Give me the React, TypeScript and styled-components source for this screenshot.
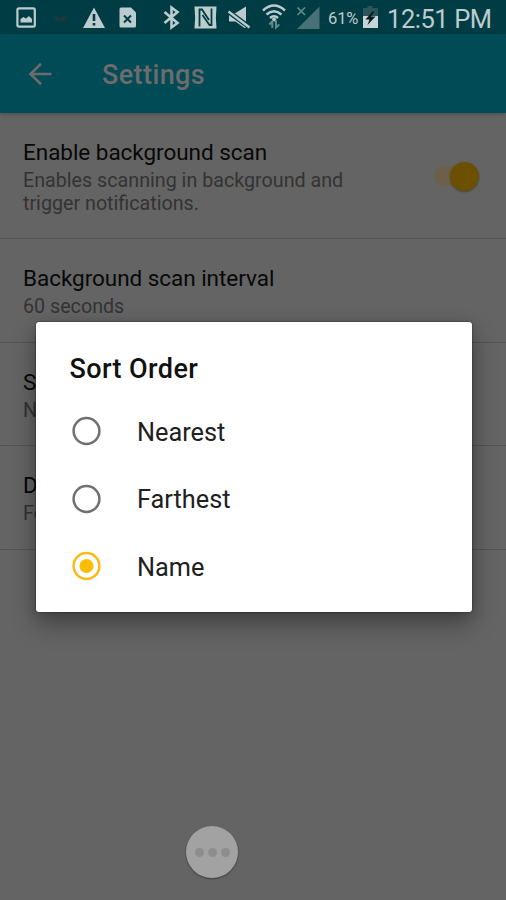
import React from "react";
import styled, { createGlobalStyle } from "styled-components";

const GlobalStyle = createGlobalStyle`
  * { box-sizing: border-box; }
  body { margin: 0; background: #646464; font-family: Roboto, "Liberation Sans", sans-serif; overflow: hidden; }
`;

const Screen = styled.main`
  position: relative;
  height: 900px;
  width: 506px;
  overflow: hidden;
  background: #646464;
`;

const StatusBar = styled.header`
  height: 34px;
  background: #003c43;
  display: flex;
  align-items: flex-start;
`;

const StatusIcons = styled.svg`
  flex: none;
  width: 326px;
  height: 34px;
`;

const Percent = styled.span`
  width: 36px;
  padding: 8px 0 0 2px;
  font-size: 16.5px;
  line-height: 21px;
  letter-spacing: -0.1px;
  color: #bccbcd;
`;

const Battery = styled.svg`
  width: 18px;
  height: 34px;
`;

const Clock = styled.span`
  padding: 4px 0 0 7px;
  font-size: 25.5px;
  line-height: 30px;
  letter-spacing: -0.45px;
  white-space: nowrap;
  color: #bccbcd;
`;

const Toolbar = styled.nav`
  height: 79px;
  display: flex;
  align-items: center;
  padding-left: 28px;
  background: #004b55;
  box-shadow: 0 1px 4px rgba(0, 0, 0, 0.25);
`;

const BackIcon = styled.svg`
  width: 24px;
  height: 24px;
`;

const PageTitle = styled.h1`
  margin: 2px 0 0 50px;
  font-size: 27px;
  line-height: 34px;
  font-weight: 500;
  letter-spacing: 0.4px;
  color: #6c6c6c;
`;

const Row = styled.section<{ $height: number }>`
  height: ${(p) => p.$height}px;
  display: flex;
  justify-content: space-between;
  padding: 24px 27px 0 23px;
  border-bottom: 1px solid #545454;
`;

const RowTitle = styled.h2`
  margin: 0;
  font-size: 22.5px;
  line-height: 30px;
  font-weight: 400;
  letter-spacing: -0.04px;
  color: #080808;
`;

const RowSummary = styled.p`
  margin: 2px 0 0;
  width: 340px;
  font-size: 19.7px;
  line-height: 23px;
  letter-spacing: 0;
  color: #333;
`;

const SwitchTrack = styled.span`
  margin: 29px 3px 0 0;
  width: 42px;
  height: 20px;
  display: flex;
  justify-content: flex-end;
  align-items: center;
  border-radius: 10px;
  background: #6a6148;
`;

const SwitchThumb = styled.span`
  flex: none;
  width: 29px;
  height: 29px;
  margin-right: -3px;
  border-radius: 50%;
  background: #6b5000;
  box-shadow: 0 1px 2px rgba(0, 0, 0, 0.3);
`;

const Dialog = styled.div`
  position: absolute;
  left: 35.5px;
  top: 322px;
  width: 436px;
  height: 289.5px;
  padding: 29.5px 34px 0;
  border-radius: 3px;
  background: #fff;
  box-shadow: 0 0 2px rgba(0, 0, 0, 0.6), 0 12px 26px rgba(0, 0, 0, 0.32), 0 3px 14px rgba(0, 0, 0, 0.15);
`;

const DialogTitle = styled.h2`
  margin: 0 0 30.5px;
  font-size: 27px;
  line-height: 34px;
  font-weight: 500;
  letter-spacing: 0.4px;
  color: #111;
`;

const Option = styled.div`
  height: 67.5px;
  display: flex;
  align-items: flex-start;
  font-size: 25.3px;
  line-height: 30px;
  letter-spacing: 0;
  color: #202020;
`;

const OptionText = styled.span`
  margin: 1.5px 0 0 33.5px;
`;

const Radio = styled.svg`
  width: 34px;
  height: 30px;
`;

const MoreButton = styled.div`
  position: absolute;
  left: 186px;
  top: 826px;
  width: 52px;
  height: 52px;
  display: flex;
  align-items: center;
  justify-content: center;
  gap: 4px;
  border-radius: 50%;
  background: #a2a2a2;
  box-shadow: 0 1px 2px rgba(0, 0, 0, 0.4);
`;

const Dot = styled.i`
  width: 9px;
  height: 9px;
  border-radius: 50%;
  background: #8d8d8d;
`;

const rows = [
  { title: "Enable background scan", summary: "Enables scanning in background and trigger notifications.", height: 126, on: true },
  { title: "Background scan interval", summary: "60 seconds", height: 104 },
  { title: "Sort Order", summary: "Name", height: 103 },
  { title: "Distance", summary: "Feet", height: 104 },
];

const options = ["Nearest", "Farthest", "Name"];
const selected = "Name";

export default function App() {
  return (
    <>
      <GlobalStyle />
      <Screen>
        <StatusBar>
          <StatusIcons viewBox="0 0 326 34" fill="none">
            <rect x="17.4" y="8.4" width="17.4" height="18.2" rx="1.5" stroke="#bccbcd" strokeWidth="2.2" />
            <path d="M20.500 22.500v-3.500l3-2 2.500 1.500 3-2.500 3 3v3.500z" fill="#bccbcd" />
            <path d="M53 18l4-2 3 2 3-2 5 1-3 4h-9z" fill="#2c3740" opacity=".6" />
            <path d="M94 7.500 105 28H83z" fill="#bccbcd" />
            <path d="M94 14v7M94 23v2.500" stroke="#003c43" strokeWidth="2.600" />
            <path d="M121 7.500h10l5 5V26a1.500 1.500 0 0 1-1.500 1.500H121a1.500 1.500 0 0 1-1.500-1.500V9a1.500 1.500 0 0 1 1.500-1.500z" fill="#bccbcd" />
            <path d="m124 15.500 7 7m0-7-7 7" stroke="#003c43" strokeWidth="2" />
            <path d="m164.500 12 13 11-6 4.500v-20l6 4.500-13 11" stroke="#bccbcd" strokeWidth="2.600" />
            <path d="M194.500 6.500h22q-1.200 11 0 22h-22q1.200-11 0-22z" fill="#bccbcd" />
            <path d="M199.500 26.500V9.500h2.500l7 10.500M211.500 8.500v16.500h-2L202.500 15" stroke="#003c43" strokeWidth="1.800" />
            <path d="M229 13h6.500L246 6.500v20.500l-10.500-6H229z" fill="#bccbcd" />
            <path d="m227 10.500 24 18" stroke="#003c43" strokeWidth="5" />
            <path d="m228.500 11.500 21 16" stroke="#bccbcd" strokeWidth="2.300" />
            <path d="M229 17.500h2.500l14.500 10-1.500.5-9-6.500H229z" fill="#bccbcd" />
            <g stroke="#bccbcd" strokeWidth="2.500">
              <path d="M263 10.500q11-10 22 0M266.500 14.500q7.500-6.500 15 0M270 18q4-3.500 8 0" />
            </g>
            <circle cx="274" cy="19.500" r="2" fill="#bccbcd" />
            <path d="M272.300 28v-6.500l-3 3M276 20.500v7l3.300-3" stroke="#648b90" strokeWidth="2" />
            <path d="M319.500 6.500V29H297z" fill="#477177" />
            <path d="m297.500 7.500 7.500 7.500m0-7.500-7.500 7.500" stroke="#648b90" strokeWidth="1.700" />
          </StatusIcons>
          <Percent>61%</Percent>
          <Battery viewBox="0 0 18 34">
            <path d="M5.500 6h5v2H16v20H1V8h4.500z" fill="#2c555a" />
            <path d="M1 16h15v12H1z" fill="#c8d5d6" />
            <path d="m10.500 11.500-7 8h4l-2 5.500 8-8.500H9l3.500-5z" fill="#071b1e" />
          </Battery>
          <Clock>12:51 PM</Clock>
        </StatusBar>
        <Toolbar>
          <BackIcon viewBox="0 0 24 24" fill="none" stroke="#6c6c6c" strokeWidth="2.600">
            <path d="M23.500 12H3M13 1.800 2.500 12 13 22.200" />
          </BackIcon>
          <PageTitle>Settings</PageTitle>
        </Toolbar>
        {rows.map((r) => (
          <Row key={r.title} $height={r.height}>
            <div>
              <RowTitle>{r.title}</RowTitle>
              <RowSummary>{r.summary}</RowSummary>
            </div>
            {r.on && <SwitchTrack><SwitchThumb /></SwitchTrack>}
          </Row>
        ))}
        <Dialog role="dialog">
          <DialogTitle>Sort Order</DialogTitle>
          {options.map((o) => (
            <Option key={o}>
              <Radio viewBox="0 0 34 30" fill="none">
                <circle cx="16.500" cy="15" r="12.900" stroke={o === selected ? "#ffb917" : "#707070"} strokeWidth="2.500" />
                {o === selected && <circle cx="16.500" cy="15" r="7" fill="#ffbc05" />}
              </Radio>
              <OptionText>{o}</OptionText>
            </Option>
          ))}
        </Dialog>
        <MoreButton><Dot /><Dot /><Dot /></MoreButton>
      </Screen>
    </>
  );
}
